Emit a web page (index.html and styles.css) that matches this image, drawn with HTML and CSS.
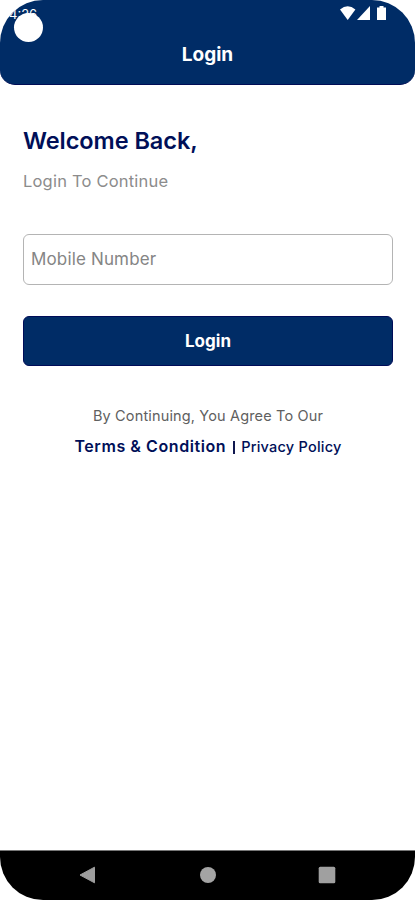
FILE: index.html
```html
<!DOCTYPE html>
<html lang="en">
<head>
<meta charset="utf-8">
<meta name="viewport" content="width=device-width">
<title>Login</title>
<link rel="stylesheet" href="styles.css">
</head>
<body>
<div class="screen">
  <header class="header">
    <div class="status">
      <span class="time">4:26</span>
      <span class="camera"></span>
      <svg class="indicators" width="48" height="16" viewBox="0 0 48 16" fill="#fff">
        <path d="M0 3.500Q7.700 -3.200 15.400 3.500L7.700 14Z"/>
        <path d="M30 0V14H17Z"/>
        <path d="M39.500 0h4v1.500h2.500V14h-9V1.500h2.500Z"/>
      </svg>
    </div>
    <h1 class="title">Login</h1>
  </header>
  <main class="content">
    <h2 class="welcome">Welcome Back,</h2>
    <p class="subtitle">Login To Continue</p>
    <input class="field" type="tel" placeholder="Mobile Number" aria-label="Mobile Number">
    <button class="submit"><span>Login</span></button>
    <p class="agree">By Continuing, You Agree To Our</p>
    <div class="links">
      <a class="terms">Terms &amp; Condition</a>
      <span class="divider"></span>
      <a class="privacy">Privacy Policy</a>
    </div>
  </main>
  <nav class="navbar">
    <svg width="18" height="18" viewBox="0 0 18 18"><path d="M1 9L15.500 1.200V16.800Z" fill="#9d9d9d" stroke="#9d9d9d" stroke-linejoin="round"/></svg>
    <svg width="18" height="18" viewBox="0 0 18 18"><circle cx="9" cy="9" r="8" fill="#a4a4a4"/></svg>
    <svg width="18" height="18" viewBox="0 0 18 18"><rect x=".7" y=".7" width="16.600" height="16.600" rx="1.500" fill="#a0a0a0"/></svg>
  </nav>
</div>
</body>
</html>
```
FILE: styles.css
```css
* { box-sizing: border-box; }
body { margin: 0; background: #fff; font-family: Inter, "Liberation Sans", sans-serif; }
h1, h2, p { margin: 0; font-kerning: normal; white-space: nowrap; }
.screen {
  width: 415px;
  height: 900px;
  display: flex;
  flex-direction: column;
  overflow: hidden;
  border-radius: 43px;
  background: #fff;
}
.header {
  position: relative;
  height: 85px;
  flex: none;
  background: #002c66;
  border-bottom: 1px solid #000c55;
  border-radius: 0 0 15px 15px;
}
.status {
  height: 40px;
  display: flex;
  justify-content: flex-end;
  padding: 6px 27px 0 0;
  color: #fff;
}
.time { position: absolute; left: 9px; top: 6px; font-size: 13px; line-height: 16px; }
.camera { position: absolute; left: 14px; top: 13px; width: 29px; height: 29px; border-radius: 50%; background: #fff; }
.title { color: #fff; font-size: 19px; line-height: 30px; font-weight: 700; text-align: center; }
.content { flex: 1; padding: 41px 22px 0 23px; }
.welcome { font-size: 23.5px; line-height: 30px; font-weight: 600; letter-spacing: -.05px; color: #000f58; }
.subtitle { margin-top: 13px; font-size: 16.5px; line-height: 24px; letter-spacing: .2px; color: #8c8c8c; }
.field {
  display: block;
  width: 100%;
  height: 51px;
  margin-top: 41px;
  padding: 0 7px 2px;
  border: 1px solid #b4b4b4;
  border-radius: 6px;
  background: #fff;
  font: 400 17px Inter, "Liberation Sans", sans-serif;
  letter-spacing: .15px;
  outline: 0;
}
.field::placeholder { color: #858585; opacity: 1; }
.submit {
  display: block;
  width: 100%;
  height: 50px;
  margin-top: 31px;
  padding: 0 0 1px;
  border: 1px solid #000c58;
  border-radius: 6px;
  background: #002c66;
  color: #fff;
  font: 700 17px Inter, "Liberation Sans", sans-serif;
}
.agree { margin-top: 40px; font-size: 14.5px; line-height: 20px; letter-spacing: .15px; color: #606060; text-align: center; }
.links { display: flex; align-items: center; justify-content: center; margin-top: 10px; height: 20px; color: #000f58; white-space: nowrap; }
.terms { font-size: 16px; font-weight: 600; letter-spacing: .57px; }
.divider { width: 2px; height: 13px; margin: 2px 6px 0 7px; background: #10184f; }
.privacy { font-size: 14.5px; font-weight: 500; letter-spacing: .23px; }
.navbar {
  height: 50px;
  flex: none;
  display: flex;
  justify-content: space-between;
  align-items: center;
  padding: 0 79px 1px;
  border-top: 1px solid #777;
  background: #000;
}
```
